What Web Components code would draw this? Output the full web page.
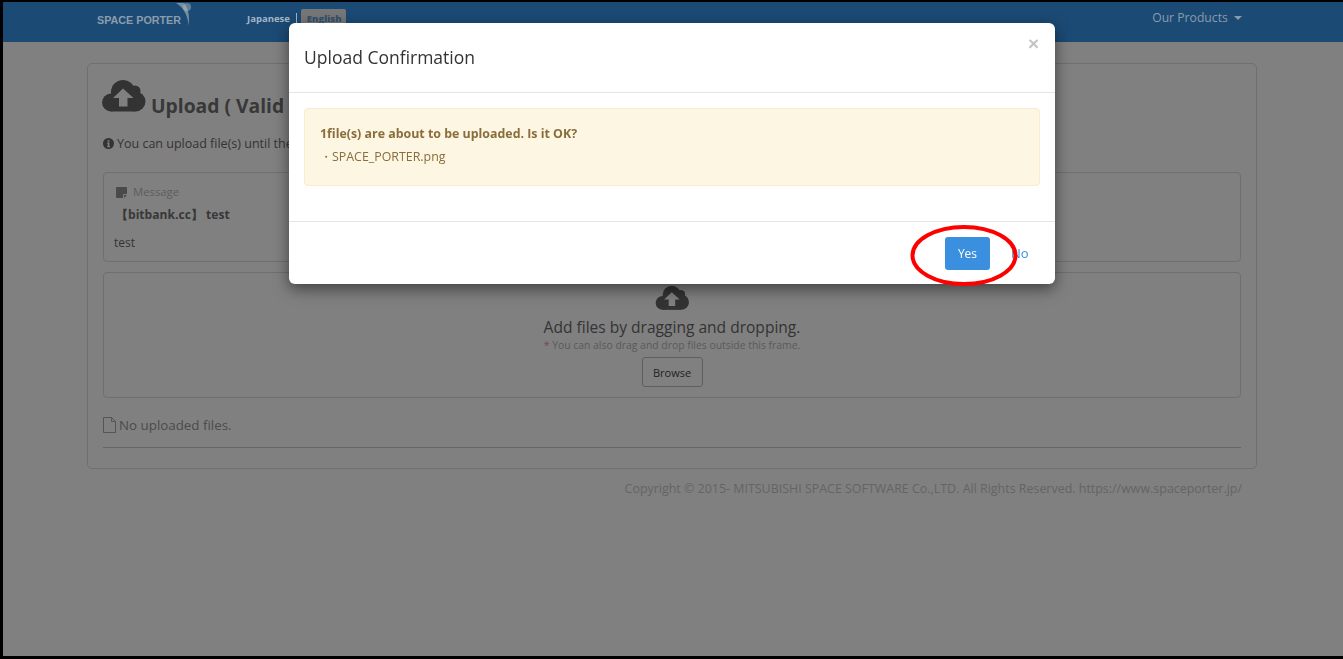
<!DOCTYPE html>
<html lang="en">
<head>
<meta charset="utf-8">
<title>Space Porter</title>
<style>
  html, body { margin: 0; height: 100%; background: #000; overflow: hidden; }
  body { padding: 2px 0 3px 3px; box-sizing: border-box; font-family: "Open Sans", "Noto Sans", sans-serif; font-size: 13px; color: #333; }
</style>
</head>
<body>
<sp-page>
  <sp-navbar></sp-navbar>
  <sp-upload-panel></sp-upload-panel>
  <sp-footer>Copyright © 2015- MITSUBISHI SPACE SOFTWARE Co.,LTD. All Rights Reserved. https://www.spaceporter.jp/</sp-footer>
</sp-page>
<sp-modal title="Upload Confirmation">
  <strong>1file(s) are about to be uploaded. Is it OK?</strong>
  <span>・SPACE_PORTER.png</span>
</sp-modal>

<script>
const CLOUD = `<svg viewBox="0 0 44 34" fill="currentColor" aria-hidden="true" style="display:block;width:100%;height:100%">
  <circle cx="21" cy="13" r="12"/><circle cx="33" cy="12" r="5.500"/><circle cx="9" cy="23.500" r="9"/><circle cx="33.500" cy="22.500" r="10"/><rect x="9" y="18" width="24" height="14.500"/>
  <path d="M21 9.500 31.500 19H25.500V27.500H17V19H11Z" fill="#808080"/></svg>`;

class SpPage extends HTMLElement {
  constructor() {
    super();
    this.attachShadow({mode: 'open'}).innerHTML = `
      <style>
        :host { display: block; height: 654px; background: #808080; overflow: hidden; }
      </style>
      <slot></slot>`;
  }
}

class SpNavbar extends HTMLElement {
  constructor() {
    super();
    this.attachShadow({mode: 'open'}).innerHTML = `
      <style>
        :host { display: flex; align-items: flex-start; height: 40px; background: #1b4a74; }
        .logo { position: relative; margin: 0 0 0 94px; padding-top: 11px; width: 150px; font: bold 10.750px/14px "Liberation Sans", sans-serif; color: #8b9dad; }
        .logo svg { position: absolute; left: 75px; top: 0; }
        .lang { display: flex; align-items: flex-start; margin-top: 7px; font: bold 9.500px/19px "Open Sans", sans-serif; color: #a4b6c6; }
        .lang i { width: 1px; height: 11px; margin: 4px 4px 0 6px; background: #9fb3c4; }
        .lang b { height: 18px; padding: 0 4px 0 6px; background: #777; color: #33516d; border-radius: 2px 2px 0 0; }
        .products { margin: 7px 0 0 auto; padding-right: 101px; color: #8a9caa; font-size: 12.200px; line-height: 18px; }
        .caret { display: inline-block; width: 0; height: 0; margin-left: 3px; vertical-align: 2px; border: 4px solid transparent; border-top-color: #8a9caa; border-bottom: 0; }
      </style>
      <div class="logo">SPACE PORTER
        <svg width="22" height="26" viewBox="0 0 22 26"><path d="M4 1C11 5 16 13 16.500 24 18 13 16 6 12 1Z" fill="#8b9dad" opacity=".8"/><circle cx="15" cy="5" r="4" fill="#b5c0ca" opacity=".45"/></svg>
      </div>
      <div class="lang">Japanese<i></i><b>English</b></div>
      <div class="products">Our Products <span class="caret"></span></div>`;
  }
}

class SpMessage extends HTMLElement {
  constructor() {
    super();
    this.attachShadow({mode: 'open'}).innerHTML = `
      <style>
        :host { display: block; height: 90px; box-sizing: border-box; border: 1px solid #6f6f6f; border-radius: 4px; padding: 10px 10px; }
        .label { display: flex; align-items: center; gap: 6px; margin-left: 2px; color: #5d5d5d; font-size: 11.300px; line-height: 18px; }
        .label svg { width: 11px; height: 11px; }
        .subject { margin: 4px 0 0 2px; font-weight: 700; font-size: 12.100px; line-height: 20px; color: #383838; }
        .body { margin-top: 9px; font-size: 12px; line-height: 18px; color: #333; }
      </style>
      <div class="label"><svg viewBox="0 0 11 11"><path d="M1 0h9a1 1 0 0 1 1 1v6H8a1 1 0 0 0-1 1v3H1a1 1 0 0 1-1-1V1a1 1 0 0 1 1-1Zm7 8h3l-3 3Z" fill="#4a4a4a"/></svg>Message</div>
      <div class="subject">【bitbank.cc】 test</div>
      <div class="body">test</div>`;
  }
}

class SpDropzone extends HTMLElement {
  constructor() {
    super();
    this.attachShadow({mode: 'open'}).innerHTML = `
      <style>
        :host { display: flex; flex-direction: column; align-items: center; height: 126px; box-sizing: border-box; margin-top: 10px; border: 1px solid #6f6f6f; border-radius: 4px; padding-top: 12px; }
        .icon { width: 35px; height: 26px; color: #333; }
        .title { margin-top: 5px; font-size: 15.550px; line-height: 22px; color: #333; }
        .note { font-size: 10.400px; line-height: 14px; color: #5a5a5a; }
        .note em { font-style: normal; color: #6e4a4a; }
        button { margin-top: 5px; width: 61px; height: 30px; background: transparent; border: 1px solid #5f5f5f; border-radius: 3px; font: 11px "Open Sans", sans-serif; color: #222; padding: 0; }
      </style>
      <div class="icon">${CLOUD}</div>
      <div class="title">Add files by dragging and dropping.</div>
      <div class="note"><em>*</em> You can also drag and drop files outside this frame.</div>
      <button>Browse</button>`;
  }
}

class SpUploadPanel extends HTMLElement {
  constructor() {
    super();
    this.attachShadow({mode: 'open'}).innerHTML = `
      <style>
        :host { display: block; box-sizing: border-box; width: 1170px; height: 406px; margin: 21px 0 0 84px; border: 1px solid #6f6f6f; border-radius: 5px; padding: 16px 15px 0; }
        h1 { display: flex; align-items: flex-end; gap: 5px; height: 40px; margin: 0 0 0 -1px; font-size: 19.300px; line-height: 28px; font-weight: 700; color: #383838; }
        h1 .icon { width: 44px; height: 34px; margin-bottom: 7px; color: #333; }
        .hint { display: flex; align-items: center; gap: 3px; margin-top: 13px; height: 20px; font-size: 12.500px; color: #333; }
        .hint svg { width: 11px; height: 11px; }
        sp-message { margin-top: 19px; }
        .none { display: flex; align-items: center; gap: 3px; margin-top: 18px; font-size: 13.350px; line-height: 18px; color: #4b4b4b; }
        .none svg { width: 13px; height: 16px; }
        hr { height: 1px; border: 0; margin: 13px 0 0; background: #666; }
      </style>
      <h1><div class="icon">${CLOUD}</div><span>Upload ( Valid</span></h1>
      <div class="hint"><svg viewBox="0 0 12 12"><circle cx="6" cy="6" r="6" fill="#333"/><path d="M5 2.500h2v1.700H5ZM4.500 5h2.500v3.800h.6V10H4.500V8.800H5.200V6.200H4.500Z" fill="#808080"/></svg>You can upload file(s) until the</div>
      <sp-message></sp-message>
      <sp-dropzone></sp-dropzone>
      <div class="none"><svg viewBox="0 0 13 16" fill="none" stroke="#555"><path d="M.5.500h8l4 4v11H.5Z"/><path d="M8.500.500v4h4"/></svg>No uploaded files.</div>
      <hr>`;
  }
}

class SpFooter extends HTMLElement {
  constructor() {
    super();
    this.attachShadow({mode: 'open'}).innerHTML = `
      <style>
        :host { display: block; margin-top: 11px; padding-right: 101px; text-align: right; font-size: 12.450px; line-height: 18px; color: #646464; }
      </style>
      <slot></slot>`;
  }
}

class SpModal extends HTMLElement {
  constructor() {
    super();
    this.attachShadow({mode: 'open'}).innerHTML = `
      <style>
        :host { position: fixed; left: 289px; top: 23px; width: 766px; height: 261px; box-sizing: border-box; display: flex; flex-direction: column; background: #fff; border-radius: 6px; box-shadow: 0 5px 15px rgba(0,0,0,.5); }
        header { position: relative; height: 70px; box-sizing: border-box; padding: 21px 15px 0; border-bottom: 1px solid #e5e5e5; }
        h4 { margin: 0; font-size: 17.500px; line-height: 26px; font-weight: 500; color: #333; }
        .close { position: absolute; right: 16px; top: 9px; font: bold 19px/24px "Liberation Sans", sans-serif; color: #c4c4c4; }
        .body { height: 129px; box-sizing: border-box; padding: 15px; border-bottom: 1px solid #e5e5e5; }
        .alert { display: flex; flex-direction: column; height: 78px; box-sizing: border-box; padding: 16px 15px 0; gap: 5px; background: #fcf6e3; border: 1px solid #faebcc; border-radius: 4px; font-size: 12.400px; line-height: 18px; color: #8a6d3b; }
        ::slotted(strong) { font-weight: 700; }
        footer { display: flex; justify-content: flex-end; align-items: center; flex: 1; padding: 0 27px 0 0; gap: 21px; }
        .yes { width: 45px; height: 33px; padding: 0; border: 0; border-radius: 3px; background: #3a8fde; color: #fff; font: 12px "Open Sans", sans-serif; }
        .no { color: #3a8fde; font-size: 13px; width: 17px; }
        .mark { position: absolute; left: 621px; top: 201px; pointer-events: none; }
      </style>
      <header><h4>${this.getAttribute('title')}</h4><span class="close">×</span></header>
      <div class="body"><div class="alert"><slot></slot></div></div>
      <footer><button class="yes">Yes</button><span class="no">No</span></footer>
      <svg class="mark" width="110" height="64" viewBox="0 0 110 64"><ellipse cx="54" cy="31.500" rx="51.500" ry="28.500" fill="none" stroke="#f00" stroke-width="4"/></svg>`;
  }
}

customElements.define('sp-page', SpPage);
customElements.define('sp-navbar', SpNavbar);
customElements.define('sp-message', SpMessage);
customElements.define('sp-dropzone', SpDropzone);
customElements.define('sp-upload-panel', SpUploadPanel);
customElements.define('sp-footer', SpFooter);
customElements.define('sp-modal', SpModal);
</script>
</body>
</html>
